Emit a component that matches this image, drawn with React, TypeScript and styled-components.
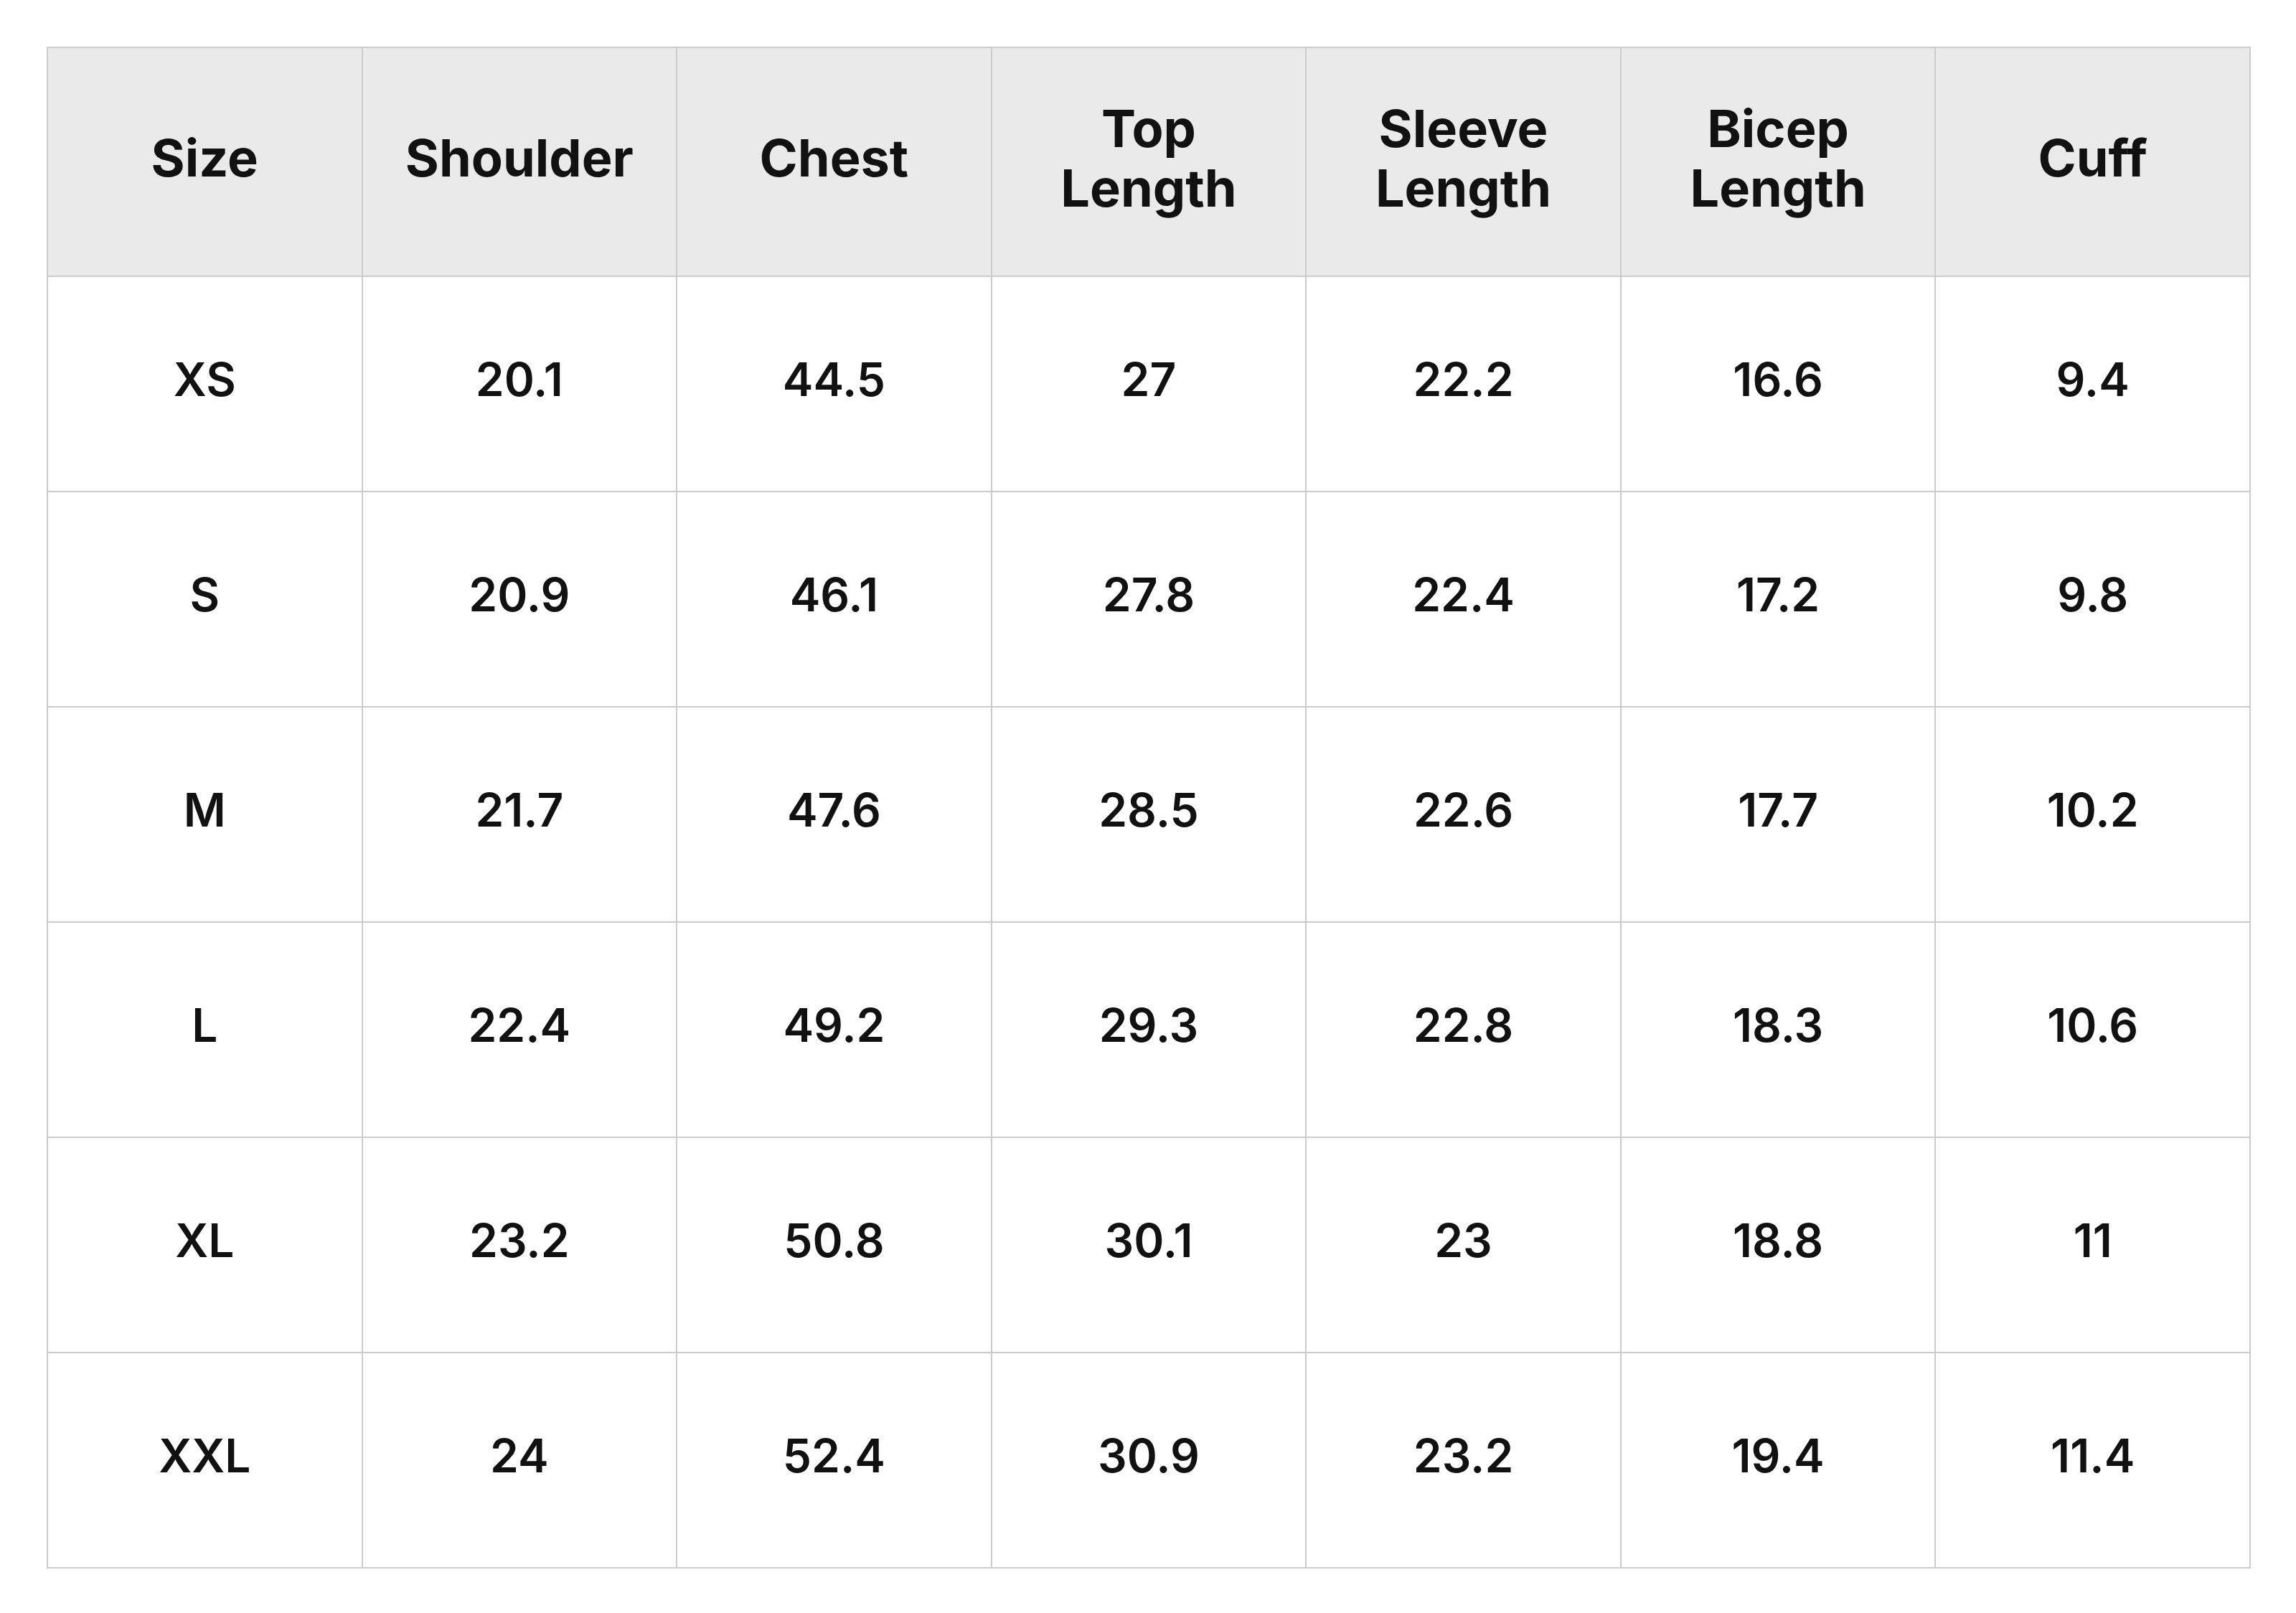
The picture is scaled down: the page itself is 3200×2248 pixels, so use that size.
import styled, { createGlobalStyle } from 'styled-components'

const GlobalStyle = createGlobalStyle`
  html, body {
    margin: 0;
    padding: 0;
    background: #ffffff;
  }
  body {
    font-family: Inter, "Liberation Sans", Arial, sans-serif;
    color: #111111;
  }
`

const Page = styled.div`
  padding: 65px 63px 62px 65px;
  background: #ffffff;
`

const Table = styled.table`
  width: 3072px;
  border-collapse: collapse;
  table-layout: fixed;
  border: 2px solid #cccccc;
`

const HeadCell = styled.th`
  height: 305px;
  padding: 0 44px 12px;
  background: #eaeaea;
  border: 2px solid #cccccc;
  font-size: 72px;
  font-weight: 700;
  line-height: 83px;
  text-align: center;
  vertical-align: middle;
  color: #111111;
`

const Cell = styled.td`
  height: 284px;
  padding: 0 44px 14px;
  border: 2px solid #cccccc;
  font-size: 64px;
  font-weight: 600;
  text-align: center;
  vertical-align: middle;
  color: #111111;
`

const columns = ['Size', 'Shoulder', 'Chest', 'Top Length', 'Sleeve Length', 'Bicep Length', 'Cuff']

const sizes = [
  ['XS', '20.1', '44.5', '27', '22.2', '16.6', '9.4'],
  ['S', '20.9', '46.1', '27.8', '22.4', '17.2', '9.8'],
  ['M', '21.7', '47.6', '28.5', '22.6', '17.7', '10.2'],
  ['L', '22.4', '49.2', '29.3', '22.8', '18.3', '10.6'],
  ['XL', '23.2', '50.8', '30.1', '23', '18.8', '11'],
  ['XXL', '24', '52.4', '30.9', '23.2', '19.4', '11.4'],
]

export default function App() {
  return (
    <>
      <GlobalStyle />
      <Page>
        <Table>
          <thead>
            <tr>
              {columns.map((c) => (
                <HeadCell key={c}>{c}</HeadCell>
              ))}
            </tr>
          </thead>
          <tbody>
            {sizes.map((row) => (
              <tr key={row[0]}>
                {row.map((v, i) => (
                  <Cell key={i}>{v}</Cell>
                ))}
              </tr>
            ))}
          </tbody>
        </Table>
      </Page>
    </>
  )
}
